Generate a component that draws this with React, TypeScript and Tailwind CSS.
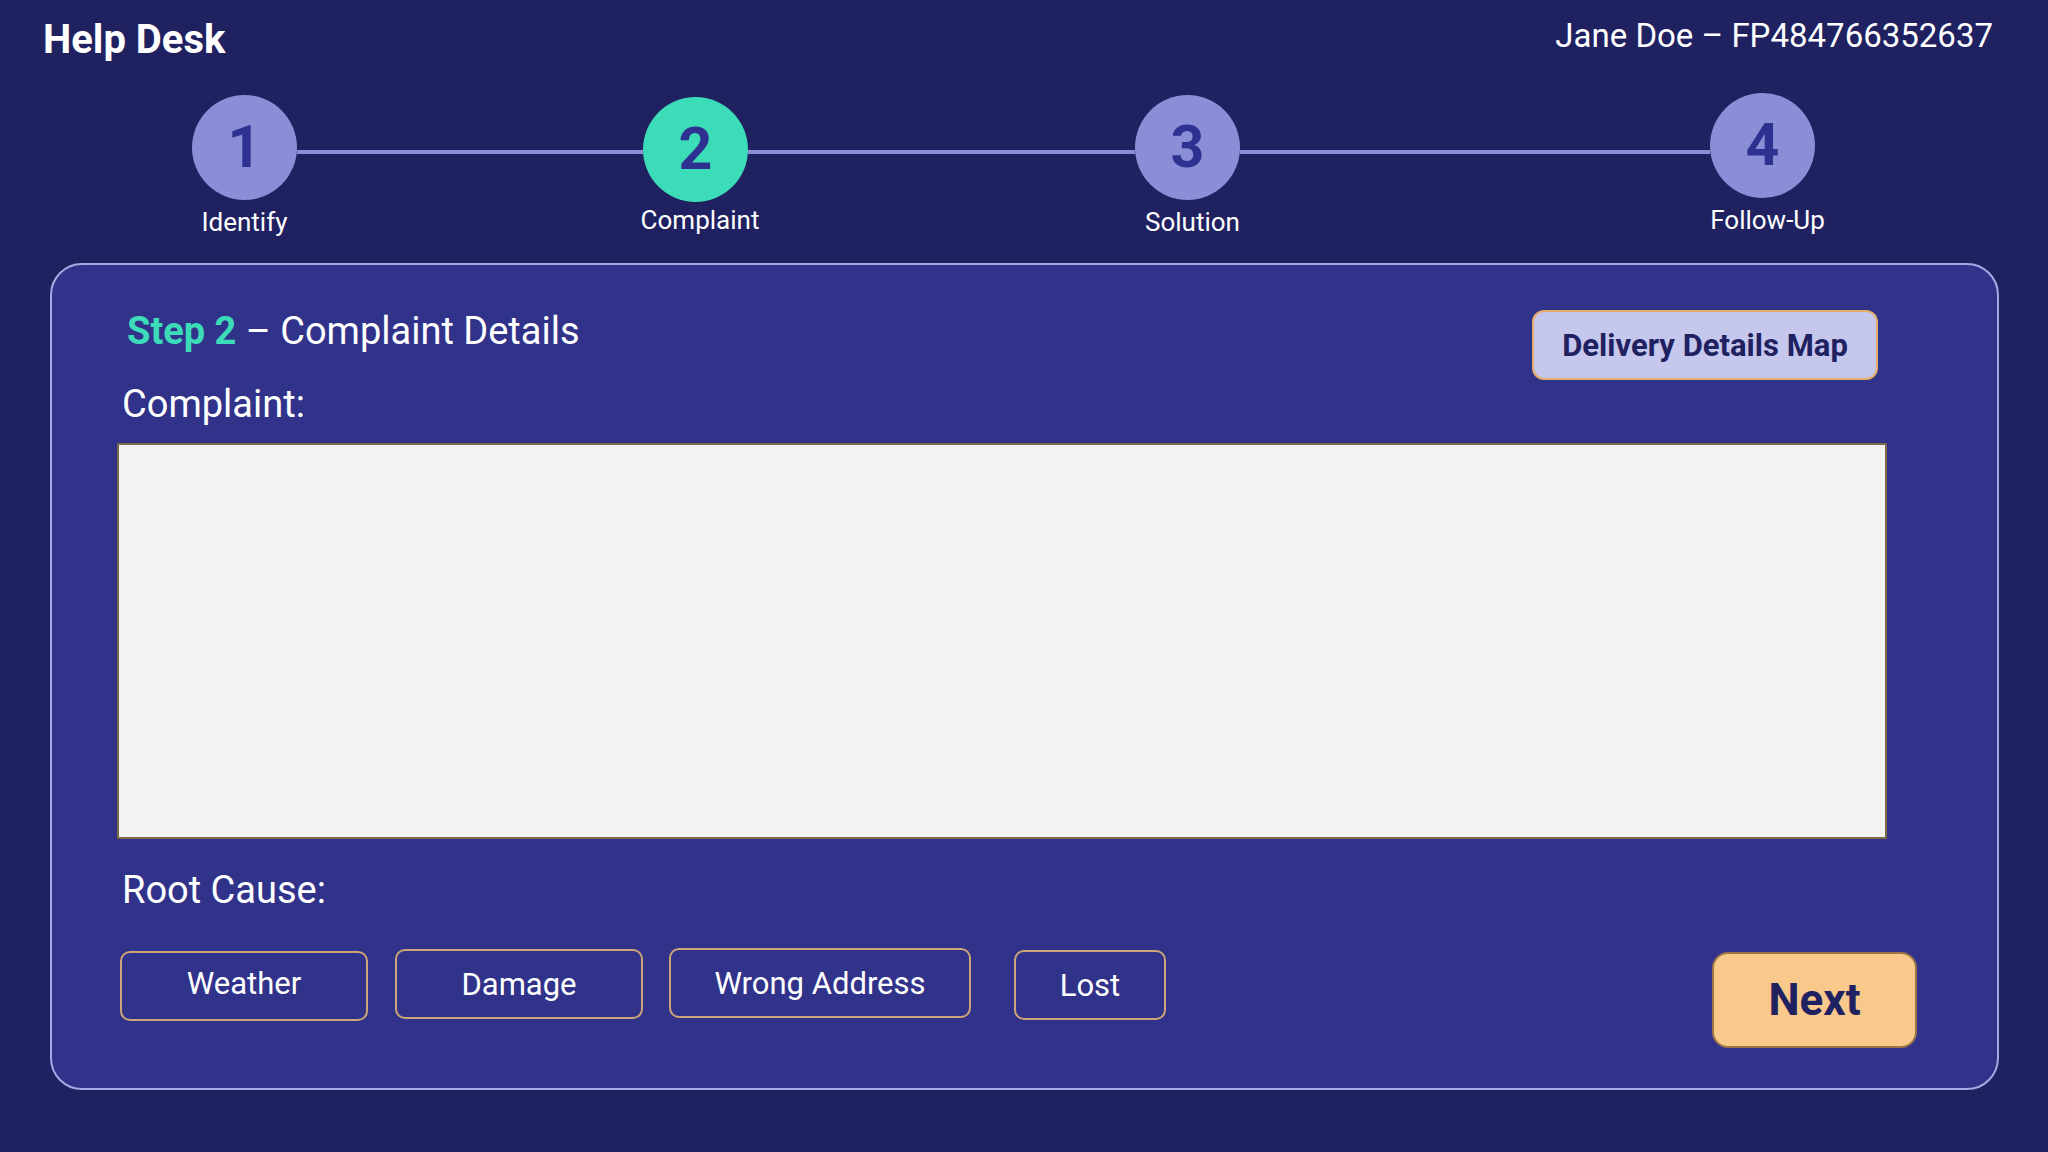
import { useState } from "react";

const steps = [
  { n: 1, label: "Identify", active: false, top: "mt-[2px]", gap: "mt-[9px]", shift: "" },
  { n: 2, label: "Complaint", active: true, top: "mt-[4px]", gap: "mt-[5px]", shift: "ml-[9px]" },
  { n: 3, label: "Solution", active: false, top: "mt-[2px]", gap: "mt-[9px]", shift: "ml-[10px]" },
  { n: 4, label: "Follow-Up", active: false, top: "mt-0", gap: "mt-[9px]", shift: "ml-[10px]" },
];

const connectors = ["w-[346px]", "w-[387px]", "w-[470px]"];

const causes = [
  { label: "Weather", cls: "w-[248px] mt-[3px] pb-[5px]" },
  { label: "Damage", cls: "w-[248px] mt-[1px] ml-[27px]" },
  { label: "Wrong Address", cls: "w-[302px] ml-[26px]" },
  { label: "Lost", cls: "w-[152px] mt-[2px] ml-[43px]" },
];

export default function App() {
  const [complaint, setComplaint] = useState("");
  const [cause, setCause] = useState<string | null>(null);

  return (
    <div className="min-h-screen bg-[#1f2161] font-['Roboto',sans-serif] text-white">
      {/* header */}
      <div className="flex items-start justify-between pl-[43px] pr-[55px] pt-[19px]">
        <h1 className="mt-[1px] text-[40px] font-bold leading-none">Help Desk</h1>
        <p className="text-[33px] leading-none">Jane Doe – FP484766352637</p>
      </div>

      {/* stepper */}
      <div className="mt-[33px] flex items-start pl-[192px]">
        {steps.map((s, i) => (
          <div key={s.n} className="flex items-start">
            <div className={`flex w-[105px] flex-col items-center ${s.top}`}>
              <div
                className={`flex h-[105px] w-[105px] items-center justify-center rounded-full pb-[3px] text-[59px] font-bold leading-none text-[#2e3190] ${
                  s.active ? "bg-[#3ddcb9]" : "bg-[#8a8ed6]"
                }`}
              >
                {s.n}
              </div>
              <span className={`whitespace-nowrap text-[26px] leading-none ${s.gap} ${s.shift}`}>{s.label}</span>
            </div>
            {i < connectors.length && <div className={`mt-[57px] h-[4px] bg-[#8a8ed6] ${connectors[i]}`} />}
          </div>
        ))}
      </div>

      {/* card */}
      <div className="ml-[50px] mr-[49px] mt-[28px] rounded-[32px] border-2 border-[#a6a9e4] bg-[#31338a] pb-[40px] pl-[65px] pr-[80px] pt-[45px]">
        <div className="flex items-start justify-between">
          <h2 className="ml-[10px] mt-[2px] text-[38px] leading-none">
            <span className="font-bold text-[#3ddcb8]">Step 2</span> – Complaint Details
          </h2>
          <button
            type="button"
            className="mr-[39px] h-[70px] w-[346px] rounded-[12px] border-2 border-[#e3ad6a] bg-[#c5c7ed] text-[31px] font-bold leading-none text-[#1f2161]"
          >
            Delivery Details Map
          </button>
        </div>

        <label className="ml-[5px] mt-[5px] block text-[38px] leading-none">Complaint:</label>
        <textarea
          value={complaint}
          onChange={(e) => setComplaint(e.target.value)}
          className="mr-[30px] mt-[20px] block h-[396px] w-[1770px] resize-none border-2 border-[#7a6a48] bg-[#f2f2f2] p-4 text-[24px] text-gray-900 outline-none"
        />

        <p className="ml-[5px] mt-[32px] text-[38px] leading-none">Root Cause:</p>

        <div className="ml-[3px] mt-[39px] flex items-start">
          {causes.map((c) => (
            <button
              key={c.label}
              type="button"
              onClick={() => setCause(c.label)}
              className={`flex h-[70px] items-center justify-center rounded-[10px] border-2 border-[#cfa476] text-[31px] leading-none ${c.cls} ${
                cause === c.label ? "bg-[#4a4db0]" : "bg-transparent"
              }`}
            >
              {c.label}
            </button>
          ))}
          <button
            type="button"
            className="ml-auto mt-[4px] h-[96px] w-[205px] rounded-[16px] border-2 border-[#9a7444] bg-[#f8c98a] text-[44px] font-bold leading-none text-[#1f2161]"
          >
            Next
          </button>
        </div>
      </div>
    </div>
  );
}
